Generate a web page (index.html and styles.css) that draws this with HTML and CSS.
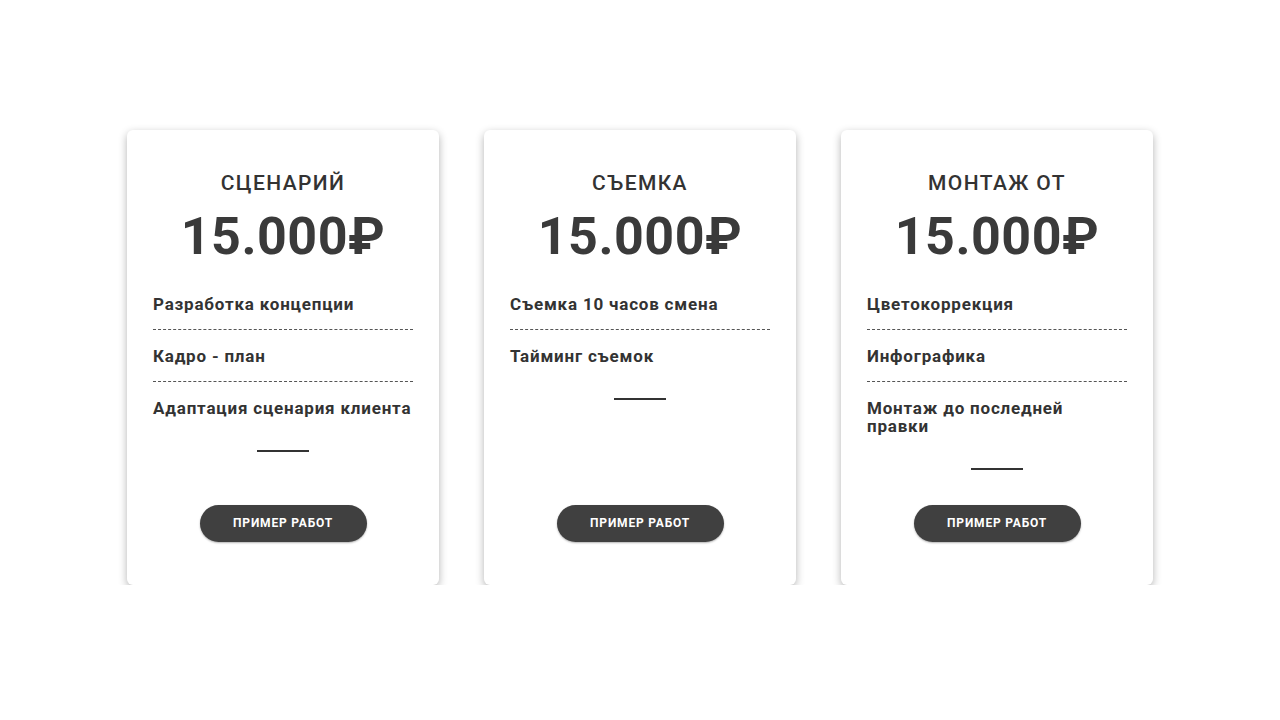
FILE: index.html
```html
<!DOCTYPE html>
<html lang="ru">
<head>
  <meta charset="UTF-8">
  <meta name="viewport" content="width=device-width, initial-scale=1.0">
  <title>Цены</title>
  <link rel="stylesheet" href="styles.css">
</head>
<body>
  <div class="prices">
    <div class="card">
      <h2 class="title">СЦЕНАРИЙ</h2>
      <div class="price">15.000₽</div>
      <ul class="list">
        <li>Разработка концепции</li>
        <li>Кадро - план</li>
        <li>Адаптация сценария клиента</li>
      </ul>
      <span class="line"></span>
      <a class="btn" href="#">ПРИМЕР РАБОТ</a>
    </div>
    <div class="card">
      <h2 class="title">СЪЕМКА</h2>
      <div class="price">15.000₽</div>
      <ul class="list">
        <li>Съемка 10 часов смена</li>
        <li>Тайминг съемок</li>
      </ul>
      <span class="line"></span>
      <a class="btn" href="#">ПРИМЕР РАБОТ</a>
    </div>
    <div class="card">
      <h2 class="title">МОНТАЖ ОТ</h2>
      <div class="price">15.000₽</div>
      <ul class="list">
        <li>Цветокоррекция</li>
        <li>Инфографика</li>
        <li>Монтаж до последней правки</li>
      </ul>
      <span class="line"></span>
      <a class="btn" href="#">ПРИМЕР РАБОТ</a>
    </div>
  </div>
</body>
</html>
```

FILE: styles.css
```css
body {
  margin: 0;
  background: #fff;
  font-family: Roboto, "Liberation Sans", sans-serif;
  color: #333;
}
.prices {
  display: flex;
  justify-content: center;
  gap: 45px;
  padding-top: 130px;
}
.card {
  width: 312px;
  height: 455px;
  box-sizing: border-box;
  padding: 40px 26px 43px;
  background: #fff;
  border-radius: 6px;
  box-shadow: 0 3px 8px rgba(0, 0, 0, .3);
  display: flex;
  flex-direction: column;
  align-items: center;
}
.title {
  margin: 0;
  font-size: 21px;
  line-height: 26px;
  font-weight: 500;
  letter-spacing: 1.4px;
}
.price {
  margin-top: 12px;
  font-size: 52px;
  line-height: 58px;
  font-weight: 700;
  letter-spacing: .5px;
  color: #3a3a3a;
}
.list {
  list-style: none;
  margin: 12px 0 0;
  padding: 0;
  align-self: stretch;
}
.list li {
  padding: 17px 0 16px;
  font-size: 17px;
  line-height: 18px;
  font-weight: 700;
  letter-spacing: .8px;
  border-bottom: 1px dashed #555;
}
.list li:last-child {
  border-bottom: none;
}
.line {
  display: block;
  width: 52px;
  height: 2px;
  margin-top: 17px;
  background: #333;
}
.btn {
  margin-top: auto;
  width: 167px;
  height: 37px;
  line-height: 37px;
  text-align: center;
  border-radius: 19px;
  background: #404040;
  color: #fff;
  text-decoration: none;
  font-size: 12px;
  font-weight: 700;
  letter-spacing: .8px;
  box-shadow: 0 1px 2px rgba(0, 0, 0, .3);
}
```
